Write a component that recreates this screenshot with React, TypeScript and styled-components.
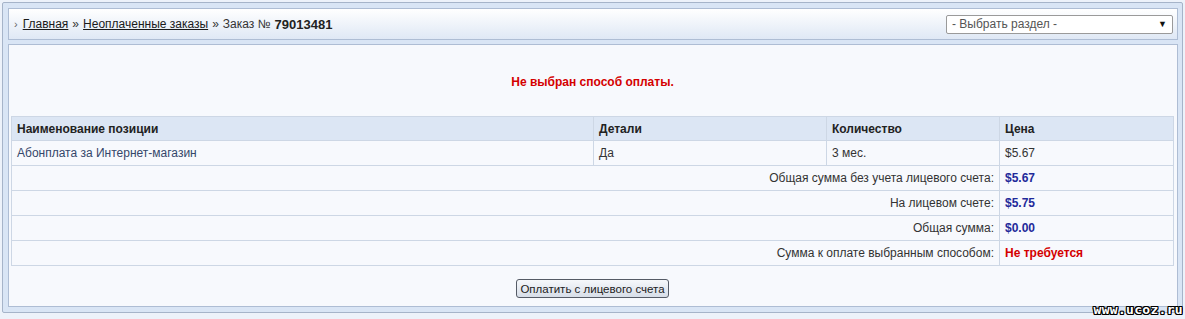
import React from 'react';
import styled, { createGlobalStyle } from 'styled-components';

const GlobalStyle = createGlobalStyle`
  html, body {
    margin: 0;
    padding: 0;
    background: #edf2fa;
  }
  body {
    font-family: "Liberation Sans", Arial, sans-serif;
    font-size: 12px;
    color: #333;
  }
`;

const Page = styled.div`
  position: relative;
  width: 1185px;
  height: 319px;
  box-sizing: border-box;
  padding: 2px 2px 6px 2px;
`;

const Frame = styled.div`
  height: 100%;
  box-sizing: border-box;
  border: 1px solid #a6b4c9;
  border-radius: 2px;
  background: #d9e5f5;
  padding: 5px 4px 5px 5px;
  display: flex;
  flex-direction: column;
  gap: 4px;
`;

const Header = styled.div`
  height: 32px;
  box-sizing: border-box;
  border: 1px solid #aebdd4;
  background: linear-gradient(#ffffff, #dfe8f5);
  display: flex;
  align-items: center;
  justify-content: space-between;
  padding: 0 4px 0 5px;
`;

const Crumbs = styled.div`
  display: flex;
  align-items: center;
  color: #333;
  font-size: 12px;
`;

const Arrow = styled.span`
  color: #666;
  font-size: 11px;
  margin-right: 5px;
`;

const CrumbLink = styled.a`
  color: #1a1a1a;
  text-decoration: underline;
`;

const Sep = styled.span`
  margin: 0 4px;
`;

const OrderNo = styled.b`
  margin-left: 4px;
  font-size: 13px;
  color: #222;
`;

const Select = styled.div`
  width: 227px;
  height: 19px;
  box-sizing: border-box;
  border: 1px solid #9a9a9a;
  border-radius: 2px;
  background: #fff;
  display: flex;
  align-items: center;
  justify-content: space-between;
  padding: 0 5px 0 5px;
  color: #555;
  font-size: 12px;
`;

const SelectArrow = styled.span`
  color: #111;
  font-size: 9px;
`;

const Content = styled.div`
  flex: 1;
  box-sizing: border-box;
  border: 1px solid #aebdd4;
  background: #f7f9fd;
  padding: 0 3px 0 2px;
  display: flex;
  flex-direction: column;
`;

const Notice = styled.div`
  text-align: center;
  color: #d40000;
  font-weight: bold;
  font-size: 12px;
  padding: 30px 0 26px 0;
  line-height: 15px;
`;

const Table = styled.table`
  width: 100%;
  border-collapse: collapse;
  table-layout: fixed;
`;

const Th = styled.th<{ $w?: number }>`
  width: ${(p) => (p.$w ? `${p.$w}px` : 'auto')};
  height: 23px;
  background: #dce6f4;
  border: 1px solid #cdd7e5;
  text-align: left;
  padding: 0 5px;
  font-weight: bold;
  color: #222;
  font-size: 12px;
`;

const Td = styled.td<{ $right?: boolean }>`
  height: 24px;
  border: 1px solid #cdd7e5;
  padding: 0 5px;
  text-align: ${(p) => (p.$right ? 'right' : 'left')};
  color: #333;
  font-size: 12px;
`;

const ItemName = styled.span`
  color: #34476a;
`;

const Amount = styled.b<{ $red?: boolean }>`
  color: ${(p) => (p.$red ? '#d40000' : '#1f2a9a')};
  font-size: 12px;
`;

const Footer = styled.div`
  display: flex;
  justify-content: center;
  padding-top: 13px;
`;

const Button = styled.button`
  height: 19px;
  box-sizing: border-box;
  padding: 0 3px;
  border: 1px solid #555b66;
  border-radius: 3px;
  background: linear-gradient(#f6f8fb, #d7dee8);
  font-family: "Liberation Sans", Arial, sans-serif;
  font-size: 11.5px;
  color: #222;
`;

const Watermark = styled.div`
  position: absolute;
  right: 2px;
  bottom: 3px;
  font-family: "DejaVu Sans Mono", monospace;
  font-weight: bold;
  font-size: 13px;
  line-height: 13px;
  letter-spacing: 0.3px;
  color: #fff;
  text-shadow: 1px 0 0 #000, -1px 0 0 #000, 0 1px 0 #000, 0 -1px 0 #000,
    1px 1px 0 #000, -1px -1px 0 #000, 1px -1px 0 #000, -1px 1px 0 #000;
`;

const totals: { label: string; value: string; red?: boolean }[] = [
  { label: 'Общая сумма без учета лицевого счета:', value: '$5.67' },
  { label: 'На лицевом счете:', value: '$5.75' },
  { label: 'Общая сумма:', value: '$0.00' },
  { label: 'Сумма к оплате выбранным способом:', value: 'Не требуется', red: true },
];

function App() {
  return (
    <Page>
      <GlobalStyle />
      <Frame>
        <Header>
          <Crumbs>
            <Arrow>›</Arrow>
            <CrumbLink>Главная</CrumbLink>
            <Sep>»</Sep>
            <CrumbLink>Неоплаченные заказы</CrumbLink>
            <Sep>»</Sep>
            Заказ №<OrderNo>79013481</OrderNo>
          </Crumbs>
          <Select>
            - Выбрать раздел -
            <SelectArrow>▼</SelectArrow>
          </Select>
        </Header>
        <Content>
          <Notice>Не выбран способ оплаты.</Notice>
          <Table>
            <thead>
              <tr>
                <Th $w={571}>Наименование позиции</Th>
                <Th $w={222}>Детали</Th>
                <Th $w={162}>Количество</Th>
                <Th>Цена</Th>
              </tr>
            </thead>
            <tbody>
              <tr>
                <Td><ItemName>Абонплата за Интернет-магазин</ItemName></Td>
                <Td>Да</Td>
                <Td>3 мес.</Td>
                <Td>$5.67</Td>
              </tr>
              {totals.map(({ label, value, red }, index) => (
                <tr key={index}>
                  <Td colSpan={3} $right>{label}</Td>
                  <Td><Amount $red={red}>{value}</Amount></Td>
                </tr>
              ))}
            </tbody>
          </Table>
          <Footer>
            <Button>Оплатить с лицевого счета</Button>
          </Footer>
        </Content>
      </Frame>
      <Watermark>www.ucoz.ru</Watermark>
    </Page>
  );
}

export default App;
